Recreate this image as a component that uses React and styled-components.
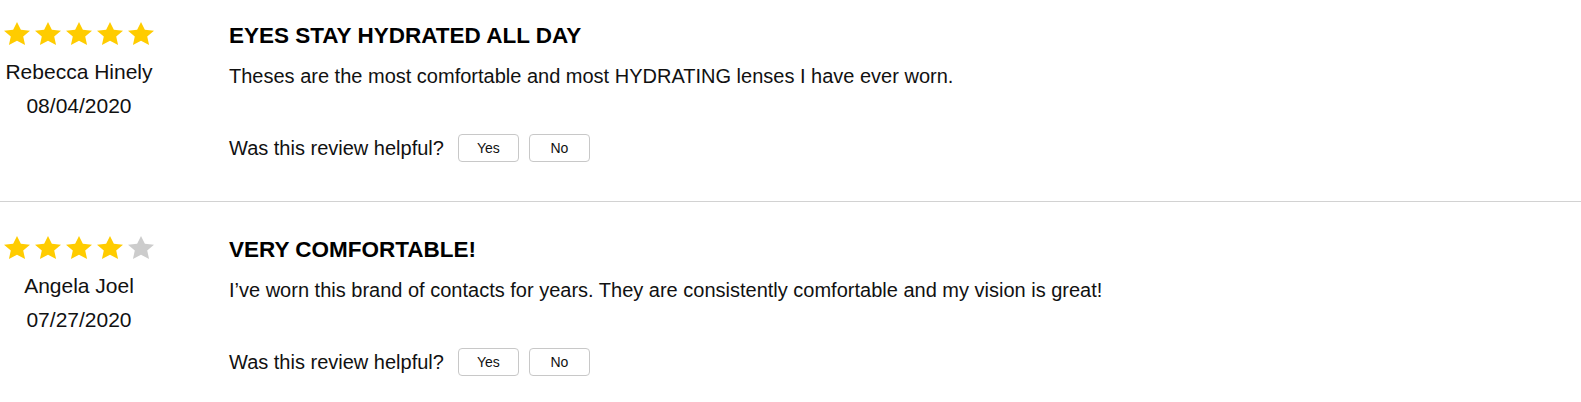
import React from 'react';
import styled, { createGlobalStyle } from 'styled-components';

const GlobalStyle = createGlobalStyle`
    body {
        margin: 0;
        background: #fff;
        font-family: "Liberation Sans", Arial, sans-serif;
        color: #111;
    }
`;

const reviews = [
    {
        rating: 5,
        name: 'Rebecca Hinely',
        date: '08/04/2020',
        title: 'EYES STAY HYDRATED ALL DAY',
        text: 'Theses are the most comfortable and most HYDRATING lenses I have ever worn.',
    },
    {
        rating: 4,
        name: 'Angela Joel',
        date: '07/27/2020',
        title: 'VERY COMFORTABLE!',
        text: 'I\u2019ve worn this brand of contacts for years. They are consistently comfortable and my vision is great!',
    },
];

function Star({ filled }) {
    return (
        <StarIcon viewBox="0.9 1.2 22.2 21" preserveAspectRatio="none" $filled={filled}>
            <path d="M12 1.2l3.3 7.1 7.8.9-5.8 5.3 1.6 7.7L12 18.3l-6.9 3.9 1.6-7.7L.9 9.2l7.8-.9z" />
        </StarIcon>
    );
}

function Review({ review, first }) {
    return (
        <Row $first={first}>
            <Author>
                <Stars>
                    {[1, 2, 3, 4, 5].map((n) => (
                        <Star key={n} filled={n <= review.rating} />
                    ))}
                </Stars>
                <Name>{review.name}</Name>
                <ReviewDate>{review.date}</ReviewDate>
            </Author>
            <Body>
                <Title>{review.title}</Title>
                <Text>{review.text}</Text>
                <Helpful>
                    <span>Was this review helpful?</span>
                    <VoteButton>Yes</VoteButton>
                    <VoteButton>No</VoteButton>
                </Helpful>
            </Body>
        </Row>
    );
}

export default function App() {
    return (
        <>
            <GlobalStyle />
            <List>
                {reviews.map((review, index) => (
                    <Review key={index} review={review} first={index === 0} />
                ))}
            </List>
        </>
    );
}

const List = styled.section`
    display: flex;
    flex-direction: column;
`;

const Row = styled.article`
    display: flex;
    gap: 71px;
    padding: ${(p) => (p.$first ? '22px' : '34px')} 0 39px 0;
    border-bottom: ${(p) => (p.$first ? 'solid 1px #d2d2d2' : 'none')};
`;

const Author = styled.div`
    width: 158px;
    display: flex;
    flex-direction: column;
    align-items: center;
    font-size: 21px;
`;

const Stars = styled.div`
    display: flex;
    gap: 5px;
    margin-bottom: 15px;
`;

const StarIcon = styled.svg`
    width: 26px;
    height: 23px;
    fill: ${(p) => (p.$filled ? '#ffcc00' : '#cccccc')};
`;

const Name = styled.div`
    line-height: 24px;
    margin-bottom: 10px;
    white-space: nowrap;
`;

const ReviewDate = styled.div`
    line-height: 24px;
`;

const Body = styled.div`
    display: flex;
    flex-direction: column;
    padding-top: 1px;
`;

const Title = styled.h3`
    margin: 0 0 15px;
    font-size: 22.5px;
    font-weight: bold;
    line-height: 26px;
    color: #000;
`;

const Text = styled.p`
    margin: 0 0 46px;
    font-size: 20px;
    line-height: 24px;
`;

const Helpful = styled.div`
    display: flex;
    align-items: center;
    gap: 10px;
    font-size: 20px;
    line-height: 24px;

    & > span {
        margin-right: 4px;
    }
`;

const VoteButton = styled.button`
    width: 61px;
    height: 28px;
    padding: 0;
    background: #fff;
    border: solid 1px #c8c8c8;
    border-radius: 4px;
    font-family: "Liberation Sans", Arial, sans-serif;
    font-size: 14px;
    color: #111;
    cursor: pointer;
`;
